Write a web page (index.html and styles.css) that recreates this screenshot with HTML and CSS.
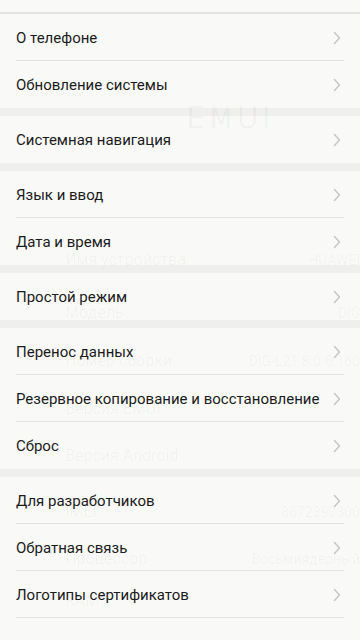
FILE: index.html
```html
<!DOCTYPE html>
<html lang="ru">
<head>
<meta charset="utf-8">
<link rel="stylesheet" href="styles.css">
</head>
<body>
<div class="screen">
  <div class="top"></div>
  <div class="group">
    <div class="row"><span class="label">О телефоне</span><svg class="chev" viewBox="0 0 8 14"><path d="M1.5 1.5 L6.5 7 L1.5 12.5"/></svg></div>
    <div class="row"><span class="label">Обновление системы</span><svg class="chev" viewBox="0 0 8 14"><path d="M1.5 1.5 L6.5 7 L1.5 12.5"/></svg></div>
  </div>
  <div class="group">
    <div class="row"><span class="label">Системная навигация</span><svg class="chev" viewBox="0 0 8 14"><path d="M1.5 1.5 L6.5 7 L1.5 12.5"/></svg></div>
  </div>
  <div class="group">
    <div class="row"><span class="label">Язык и ввод</span><svg class="chev" viewBox="0 0 8 14"><path d="M1.5 1.5 L6.5 7 L1.5 12.5"/></svg></div>
    <div class="row"><span class="label">Дата и время</span><svg class="chev" viewBox="0 0 8 14"><path d="M1.5 1.5 L6.5 7 L1.5 12.5"/></svg></div>
  </div>
  <div class="group">
    <div class="row"><span class="label">Простой режим</span><svg class="chev" viewBox="0 0 8 14"><path d="M1.5 1.5 L6.5 7 L1.5 12.5"/></svg></div>
  </div>
  <div class="group">
    <div class="row"><span class="label">Перенос данных</span><svg class="chev" viewBox="0 0 8 14"><path d="M1.5 1.5 L6.5 7 L1.5 12.5"/></svg></div>
    <div class="row"><span class="label">Резервное копирование и восстановление</span><svg class="chev" viewBox="0 0 8 14"><path d="M1.5 1.5 L6.5 7 L1.5 12.5"/></svg></div>
    <div class="row"><span class="label">Сброс</span><svg class="chev" viewBox="0 0 8 14"><path d="M1.5 1.5 L6.5 7 L1.5 12.5"/></svg></div>
  </div>
  <div class="group last">
    <div class="row"><span class="label">Для разработчиков</span><svg class="chev" viewBox="0 0 8 14"><path d="M1.5 1.5 L6.5 7 L1.5 12.5"/></svg></div>
    <div class="row"><span class="label">Обратная связь</span><svg class="chev" viewBox="0 0 8 14"><path d="M1.5 1.5 L6.5 7 L1.5 12.5"/></svg></div>
    <div class="row"><span class="label">Логотипы сертификатов</span><svg class="chev" viewBox="0 0 8 14"><path d="M1.5 1.5 L6.5 7 L1.5 12.5"/></svg></div>
  </div>

  <div class="ghost" aria-hidden="true">
    <div class="ghost-logo">EMUI</div>
    <div class="ghost-item" style="top:250px"><span>Имя устройства</span><span>HUAWEI</span></div>
    <div class="ghost-item" style="top:303px"><span>Модель</span><span>DIG</span></div>
    <div class="ghost-item" style="top:351px"><span>Номер сборки</span><span>DIG-L21 8.0.0.160</span></div>
    <div class="ghost-item" style="top:399px"><span>Версия EMUI</span><span></span></div>
    <div class="ghost-item" style="top:446px"><span>Версия Android</span><span></span></div>
    <div class="ghost-item" style="top:502px"><span>IMEI</span><span>8672390300</span></div>
    <div class="ghost-item" style="top:549px"><span>Процессор</span><span>Восьмиядерный</span></div>
    <div class="ghost-item" style="top:591px"><span>RAM</span><span></span></div>
  </div>
</div>
</body>
</html>
```
FILE: styles.css
```css
html, body {
  margin: 0;
  padding: 0;
  background: #f9faf8;
}
body {
  font-family: Roboto, "Noto Sans", "Liberation Sans", sans-serif;
  color: #1b1b1b;
}
.screen {
  position: relative;
  width: 360px;
  height: 640px;
  overflow: hidden;
  background: #f9faf8;
}
.top {
  height: 12px;
  border-bottom: 2px solid #e2e3e1;
}
.group {
  padding: 0 16px;
  border-bottom: 8px solid #efefed;
}
.group.last {
  border-bottom: none;
}
.row {
  height: 47px;
  display: flex;
  align-items: center;
  justify-content: space-between;
  box-sizing: border-box;
  border-bottom: 1px solid #e3e4e2;
  padding-top: 1px;
}
.group .row:last-child {
  border-bottom: none;
}
.group.last .row:last-child {
  border-bottom: 1px solid #e3e4e2;
}
.label {
  font-size: 15px;
  white-space: nowrap;
}
.chev {
  width: 8px;
  height: 14px;
  margin-right: 3px;
  flex: none;
}
.chev path {
  fill: none;
  stroke: #c4c5c3;
  stroke-width: 1.4;
  stroke-linecap: round;
  stroke-linejoin: round;
}
.ghost {
  position: absolute;
  inset: 0;
  pointer-events: none;
  color: rgba(0, 0, 0, 0.04);
}
.ghost-logo {
  position: absolute;
  left: 186px;
  top: 100px;
  font-family: "DejaVu Sans", sans-serif;
  font-size: 30px;
  font-weight: 200;
  letter-spacing: 3px;
  color: transparent;
  -webkit-text-stroke: 1px rgba(0, 0, 0, 0.05);
}
.ghost-item {
  position: absolute;
  left: 65px;
  right: 0;
  display: flex;
  justify-content: space-between;
  font-size: 16px;
}
.ghost-item span:last-child {
  font-size: 14px;
  padding-top: 2px;
}
```
